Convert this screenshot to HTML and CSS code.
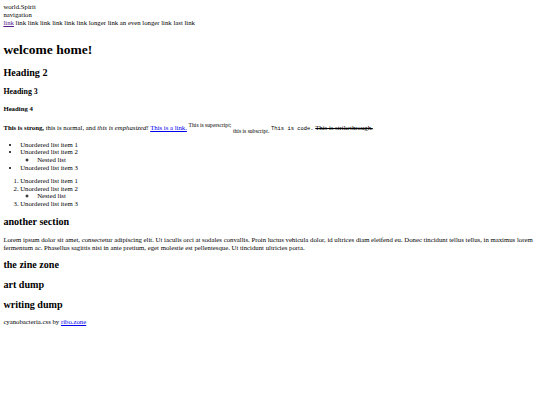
FILE: index.html
```html
<!DOCTYPE html>
<html>
<head>
<meta charset="utf-8">
<link rel="stylesheet" href="styles.css">
</head>
<body class="page">
<div class="frame">
<header class="site-header">
<div class="site-title">world.Spirit</div>
<nav class="site-nav">
<div class="nav-label">navigation</div>
<div class="nav-links"><a class="visited" href="#">link</a> link link link link link link longer link an even longer link last link</div>
</nav>
</header>
<main class="content">
<h1 class="h1">welcome home!</h1>
<h2 class="h2">Heading 2</h2>
<h3 class="h3">Heading 3</h3>
<h4 class="h4">Heading 4</h4>
<p class="para"><strong>This is strong,</strong> this is normal, and <em>this is emphasized!</em> <a class="link" href="#">This is a link.</a> <sup class="sup">This is superscript;</sup> <sub class="sub">this is subscript.</sub> <code class="code">This is code.</code> <s>This is strikethrough.</s></p>
<ul class="list">
<li>Unordered list item 1</li>
<li>Unordered list item 2
<ul class="sublist"><li>Nested list</li></ul>
</li>
<li>Unordered list item 3</li>
</ul>
<ol class="list">
<li>Unordered list item 1</li>
<li>Unordered list item 2
<ul class="sublist"><li>Nested list</li></ul>
</li>
<li>Unordered list item 3</li>
</ol>
<section>
<h2 class="h2s">another section</h2>
<p class="para">Lorem ipsum dolor sit amet, consectetur adipiscing elit. Ut iaculis orci at sodales convallis. Proin luctus vehicula dolor, id ultrices diam eleifend eu. Donec tincidunt tellus tellus, in maximus lorem fermentum ac. Phasellus sagittis nisi in ante pretium, eget molestie est pellentesque. Ut tincidunt ultricies porta.</p>
</section>
<section>
<h2 class="h2s">the zine zone</h2>
</section>
<section>
<h2 class="h2s">art dump</h2>
</section>
<section>
<h2 class="h2s">writing dump</h2>
</section>
</main>
<footer class="site-footer">cyanobacteria.css by <a class="link" href="#">ribo.zone</a></footer>
</div>
</body>
</html>
```
FILE: styles.css
```css
html { background: #fff; }
.page {
  margin: 0;
  font-family: "Liberation Serif", "Times New Roman", serif;
  font-size: 16px;
  line-height: 1.15;
  color: #000;
}
.frame {
  zoom: 0.421875;
  padding: 8px;
}
.site-header { padding-bottom: 16px; }
a.link { color: #0000ee; }
a.visited { color: #551a8b; }
.h1 { font-size: 2em; margin: 0.67em 0; }
.h2 { font-size: 1.5em; margin: 0.83em 0; }
.h3 { font-size: 1.17em; margin: 1em 0; }
.h4 { font-size: 1em; margin: 1.33em 0; }
.h2s { font-size: 1.5em; margin: 0.8em 0; }
.para { margin: 1em 0; }
.list { margin: 0.8em 0; padding-left: 40px; }
.sublist { margin: 0; padding-left: 40px; list-style-type: circle; }
.code { font-family: "Liberation Mono", monospace; font-size: 13px; }
.sup, .sub { font-size: smaller; }
.site-footer { margin-top: -2px; }
```
